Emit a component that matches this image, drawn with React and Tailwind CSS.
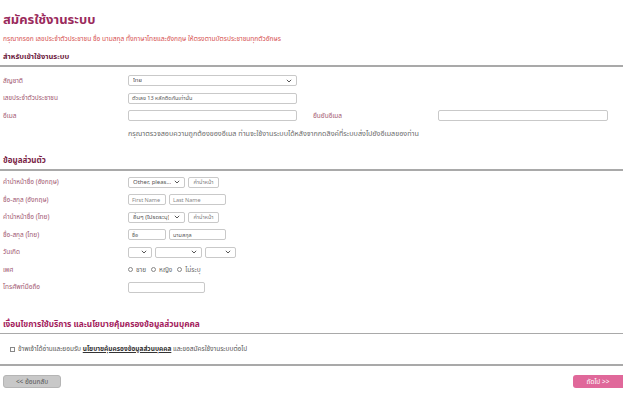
import React from "react";

const F = { fontFamily: '"Noto Sans", "Noto Sans Thai", Tahoma, sans-serif' };

function Chevron() {
  return (
    <svg width="6" height="4" viewBox="0 0 6 4" className="shrink-0">
      <path d="M0.8 0.8 L3 3 L5.2 0.8" fill="none" stroke="#444" strokeWidth="0.9" />
    </svg>
  );
}

function Select({ w, text }) {
  return (
    <div className={`${w} h-[11px] border border-[#c9c9c9] rounded-[2px] bg-white flex items-center justify-between px-[4px] text-[6px] text-[#555]`}>
      <span className="truncate">{text}</span>
      <Chevron />
    </div>
  );
}

function Input({ w, text, muted }) {
  return (
    <div className={`${w} h-[11px] border border-[#c9c9c9] rounded-[2px] bg-white flex items-center px-[3px] text-[5.5px] whitespace-nowrap overflow-hidden ${muted ? "text-[#888]" : "text-[#555]"}`}>
      <span>{text}</span>
    </div>
  );
}

function Btn({ text }) {
  return (
    <div className="w-[31px] h-[11px] border border-[#c9c9c9] rounded-[2px] bg-white flex items-center justify-center text-[5.5px] text-[#777]">
      {text}
    </div>
  );
}

function Row({ label, children, h = "h-[17.5px]" }) {
  return (
    <div className={`flex items-center ${h}`}>
      <div className="w-[125px] shrink-0 text-[6.5px] text-[#a0566f]">{label}</div>
      <div className="flex items-center gap-[3px]">{children}</div>
    </div>
  );
}

export default function App() {
  return (
    <div style={F} className="w-[623px] h-[397px] bg-white relative overflow-hidden">
      <div className="pl-[3px] pt-[9px]">
        <div className="text-[13px] font-bold text-[#9a2a5c] leading-[21px]">สมัครใช้งานระบบ</div>
        <div className="mt-[4px] text-[6.6px] text-[#d65050] leading-[9px]">
          กรุณากรอก เลขประจำตัวประชาชน ชื่อ นามสกุล ทั้งภาษาไทยและอังกฤษ ให้ตรงตามบัตรประชาชนทุกตัวอักษร
        </div>
        <div className="mt-[7px] text-[7.5px] font-bold text-[#6e2342] leading-[12px]">สำหรับเข้าใช้งานระบบ</div>
      </div>
      <div className="mt-[3px] h-[2px] bg-[#a9a9a9]" />

      <div className="pl-[3px] pt-[5px]">
        <Row label="สัญชาติ">
          <Select w="w-[169px]" text="ไทย" />
        </Row>
        <Row label="เลขประจำตัวประชาชน">
          <Input w="w-[169px]" text="ตัวเลข 13 หลักติดกันเท่านั้น" />
        </Row>
        <Row label="อีเมล">
          <Input w="w-[169px]" text="" />
          <div className="w-[135px] pl-[13px] text-[6.5px] text-[#a0566f]">ยืนยันอีเมล</div>
          <Input w="w-[170px]" text="" />
        </Row>
        <div className="flex items-center h-[17px]">
          <div className="w-[125px] shrink-0" />
          <div className="text-[7.2px] text-[#6a6a6a]">กรุณาตรวจสอบความถูกต้องของอีเมล ท่านจะใช้งานระบบได้หลังจากกดลิงค์ที่ระบบส่งไปยังอีเมลของท่าน</div>
        </div>
      </div>

      <div className="pl-[3px] mt-[12px] text-[8px] font-bold text-[#7a2447] leading-[12px]">ข้อมูลส่วนตัว</div>
      <div className="mt-[3px] h-[2px] bg-[#a9a9a9]" />

      <div className="pl-[3px] pt-[3px]">
        <Row label="คำนำหน้าชื่อ (อังกฤษ)">
          <Select w="w-[57px]" text="Other, pleas..." />
          <Btn text="คำนำหน้า" />
        </Row>
        <Row label="ชื่อ-สกุล (อังกฤษ)">
          <Input w="w-[38px]" text="First Name" muted />
          <Input w="w-[57px]" text="Last Name" muted />
        </Row>
        <Row label="คำนำหน้าชื่อ (ไทย)">
          <Select w="w-[57px]" text="อื่นๆ (โปรดระบุ)" />
          <Btn text="คำนำหน้า" />
        </Row>
        <Row label="ชื่อ-สกุล (ไทย)">
          <Input w="w-[38px]" text="ชื่อ" />
          <Input w="w-[57px]" text="นามสกุล" />
        </Row>
        <Row label="วันเกิด">
          <Select w="w-[24px]" text="" />
          <Select w="w-[47px]" text="" />
          <Select w="w-[31px]" text="" />
        </Row>
        <Row label="เพศ">
          <div className="flex items-center gap-[3px] text-[6.5px] text-[#666]">
            <span className="w-[5px] h-[5px] rounded-full border border-[#888]" />
            <span>ชาย</span>
            <span className="w-[5px] h-[5px] rounded-full border border-[#888] ml-[2px]" />
            <span>หญิง</span>
            <span className="w-[5px] h-[5px] rounded-full border border-[#888] ml-[2px]" />
            <span>ไม่ระบุ</span>
          </div>
        </Row>
        <Row label="โทรศัพท์มือถือ">
          <Input w="w-[77px]" text="" />
        </Row>
      </div>

      <div className="pl-[3px] mt-[22px] text-[8.3px] font-bold text-[#a3205c] leading-[12px]">
        เงื่อนไขการใช้บริการ และนโยบายคุ้มครองข้อมูลส่วนบุคคล
      </div>
      <div className="mt-[3px] h-[1px] bg-[#a9a9a9]" />
      <div className="pl-[10px] h-[30px] flex items-center gap-[3px] text-[6.5px] text-[#555]">
        <span className="w-[5px] h-[5px] border border-[#888]" />
        <span>
          ข้าพเจ้าได้อ่านและยอมรับ{" "}
          <span className="underline font-bold text-[#333]">นโยบายคุ้มครองข้อมูลส่วนบุคคล</span>{" "}
          และขอสมัครใช้งานระบบต่อไป
        </span>
      </div>
      <div className="h-[2px] bg-[#a9a9a9]" />

      <div className="flex justify-between items-center mt-[9px] pl-[3px]">
        <div className="w-[58px] h-[13px] rounded-[3px] bg-[#c8c8c8] border border-[#b5b5b5] flex items-center justify-center text-[6.5px] text-[#555]">
          &lt;&lt; ย้อนกลับ
        </div>
        <div className="w-[50px] h-[13px] rounded-l-[3px] bg-[#e0689a] flex items-center justify-center text-[6.5px] text-white">
          ถัดไป &gt;&gt;
        </div>
      </div>
    </div>
  );
}
